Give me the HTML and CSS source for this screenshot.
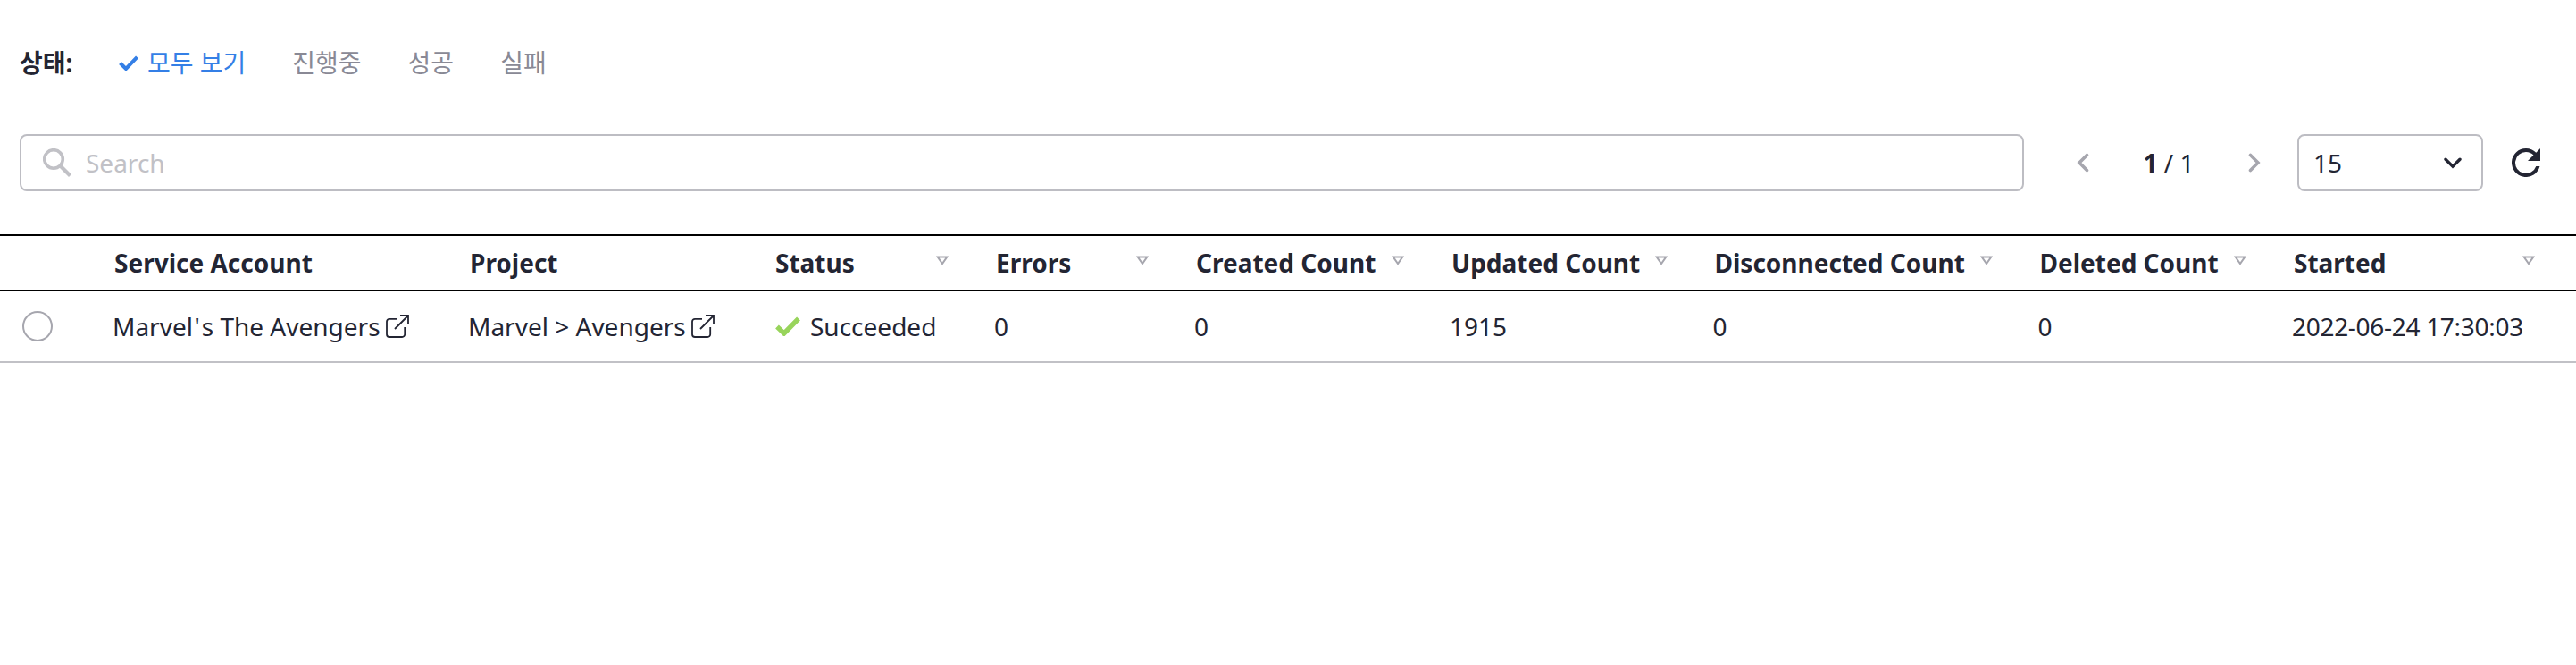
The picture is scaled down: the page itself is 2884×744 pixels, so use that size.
FILE: index.html
```html
<!DOCTYPE html>
<html lang="ko">
<head>
<meta charset="utf-8">
<title>Collector History</title>
<link rel="stylesheet" href="styles.css">
</head>
<body>
<svg width="0" height="0" class="defs">
  <symbol id="sort" viewBox="0 0 14 11"><path d="M1.8 1.5h10.4L7 9z" fill="none" stroke="#a6a6ae" stroke-width="2"/></symbol>
  <symbol id="external" viewBox="0 0 26 26"><path d="M12 4.8H4a3 3 0 0 0-3 3V22a3 3 0 0 0 3 3h14.200a3 3 0 0 0 3-3v-8M16 1h9v9M25 1L10 16" fill="none" stroke="#232533" stroke-width="1.800"/></symbol>
</svg>
<nav class="filters">
  <span class="filters-label">상태:</span>
  <a class="filter active"><svg class="filter-check" viewBox="0 0 22 17"><path d="M1.500 8.500L8 15 20.500 1.800" fill="none" stroke="#347fe6" stroke-width="4"/></svg>모두 보기</a>
  <a class="filter">진행중</a>
  <a class="filter">성공</a>
  <a class="filter">실패</a>
</nav>
<div class="toolbar">
  <div class="search">
    <svg class="search-icon" viewBox="0 0 32 32"><circle cx="12" cy="12" r="10.300" fill="none" stroke="#c1c1c6" stroke-width="3.600"/><path d="M19.500 19.500L30.500 30.500" stroke="#c1c1c6" stroke-width="4.200"/></svg>
    <span>Search</span>
  </div>
  <div class="pager">
    <svg class="arrow" viewBox="0 0 14 22"><path d="M11.500 2.500L3 11l8.500 8.500" fill="none" stroke="#a6a6ae" stroke-width="3.600" stroke-linecap="round"/></svg>
    <span class="pages"><b>1</b> / 1</span>
    <svg class="arrow" viewBox="0 0 14 22"><path d="M2.500 2.500L11 11l-8.500 8.500" fill="none" stroke="#a6a6ae" stroke-width="3.600" stroke-linecap="round"/></svg>
  </div>
  <div class="select"><span>15</span><svg class="chevron" viewBox="0 0 20 13"><path d="M2 2.200L10 10.200l8-8" fill="none" stroke="#232533" stroke-width="3.400" stroke-linecap="round"/></svg></div>
  <svg class="refresh" viewBox="4 4 16 16"><path d="M17.650 6.350A7.958 7.958 0 0 0 12 4a8 8 0 1 0 7.730 10h-2.080A6 6 0 1 1 12 6c1.660 0 3.140.690 4.220 1.780L13 11h7V4z" fill="#232533"/></svg>
</div>
<div class="table">
  <div class="row head">
    <div></div>
    <div class="cell">Service Account</div>
    <div class="cell">Project</div>
    <div class="cell">Status<svg class="sort"><use href="#sort"/></svg></div>
    <div class="cell">Errors<svg class="sort"><use href="#sort"/></svg></div>
    <div class="cell">Created Count<svg class="sort"><use href="#sort"/></svg></div>
    <div class="cell">Updated Count<svg class="sort"><use href="#sort"/></svg></div>
    <div class="cell">Disconnected Count<svg class="sort"><use href="#sort"/></svg></div>
    <div class="cell">Deleted Count<svg class="sort"><use href="#sort"/></svg></div>
    <div class="cell">Started<svg class="sort"><use href="#sort"/></svg></div>
  </div>
  <div class="row body">
    <div class="pick"><span class="radio"></span></div>
    <div class="cell"><span>Marvel<span class="apostrophe">'</span>s The Avengers</span><svg class="external"><use href="#external"/></svg></div>
    <div class="cell">Marvel &gt; Avengers<svg class="external"><use href="#external"/></svg></div>
    <div class="cell status"><svg class="ok" viewBox="0 0 28 22"><path d="M2 11.500L9.800 19 26 2.500" fill="none" stroke="#98d45b" stroke-width="5.400"/></svg>Succeeded</div>
    <div class="cell">0</div>
    <div class="cell">0</div>
    <div class="cell">1915</div>
    <div class="cell">0</div>
    <div class="cell">0</div>
    <div class="cell date">2022-06-24 17:30:03</div>
  </div>
</div>
</body>
</html>
```
FILE: styles.css
```css
* { box-sizing: border-box; }
body {
  margin: 0;
  background: #fff;
  color: #232533;
  font: 28px/38px "Noto Sans", "Noto Sans CJK KR", sans-serif;
  white-space: nowrap;
  overflow: hidden;
}
svg { flex: none; display: block; }
.defs { position: absolute; }

.filters {
  display: flex;
  align-items: center;
  height: 150px;
  padding: 0 22px 10px;
}
.filters-label { width: 111px; font-weight: 700; }
.filter { display: flex; align-items: center; margin-right: 52px; color: #898995; }
.filter.active { color: #347fe6; }
.filter-check { width: 22px; height: 17px; margin-right: 10px; }

.toolbar { display: flex; align-items: center; height: 64px; padding-left: 22px; }
.search {
  display: flex;
  align-items: center;
  width: 2244px;
  height: 64px;
  padding-left: 24px;
  border: 2px solid #bdbdc3;
  border-radius: 8px;
  color: #c1c1c6;
}
.search-icon { width: 32px; height: 32px; margin-right: 16px; }
.pager { display: flex; align-items: center; width: 206px; margin: 0 41px 0 59px; justify-content: space-between; }
.arrow { width: 14px; height: 22px; }
.select {
  display: flex;
  align-items: center;
  justify-content: space-between;
  width: 208px;
  height: 64px;
  padding: 0 22px 0 16px;
  border: 2px solid #bdbdc3;
  border-radius: 8px;
}
.chevron { width: 20px; height: 13px; }
.refresh { width: 32px; height: 32px; margin-left: 32px; }

.table { margin-top: 48px; }
.row {
  display: grid;
  grid-template-columns: 95px 398px 342px 247px 224px 286px 294.5px 364px 284.500px 323px;
  align-items: center;
}
.head { height: 64px; border-top: 2px solid #000; border-bottom: 2px solid #000; font-weight: 700; }
.body { height: 80px; border-bottom: 2px solid #c1c1c6; }
.cell { display: flex; align-items: center; padding-left: 31px; }
.head .cell { justify-content: space-between; padding: 0 20px 0 33px; }
.sort { width: 14px; height: 11px; margin-bottom: 5px; }
.pick { padding-left: 25px; }
.radio { display: block; width: 34px; height: 34px; border: 2px solid #a6a6ae; border-radius: 50%; }
.external { width: 26px; height: 26px; margin-left: 6px; }
.apostrophe { padding: 0 2px 0 1.5px; }
.status { padding-left: 33px; }
.ok { width: 28px; height: 22px; margin-right: 11px; }
.date { letter-spacing: -0.3px; }
```
